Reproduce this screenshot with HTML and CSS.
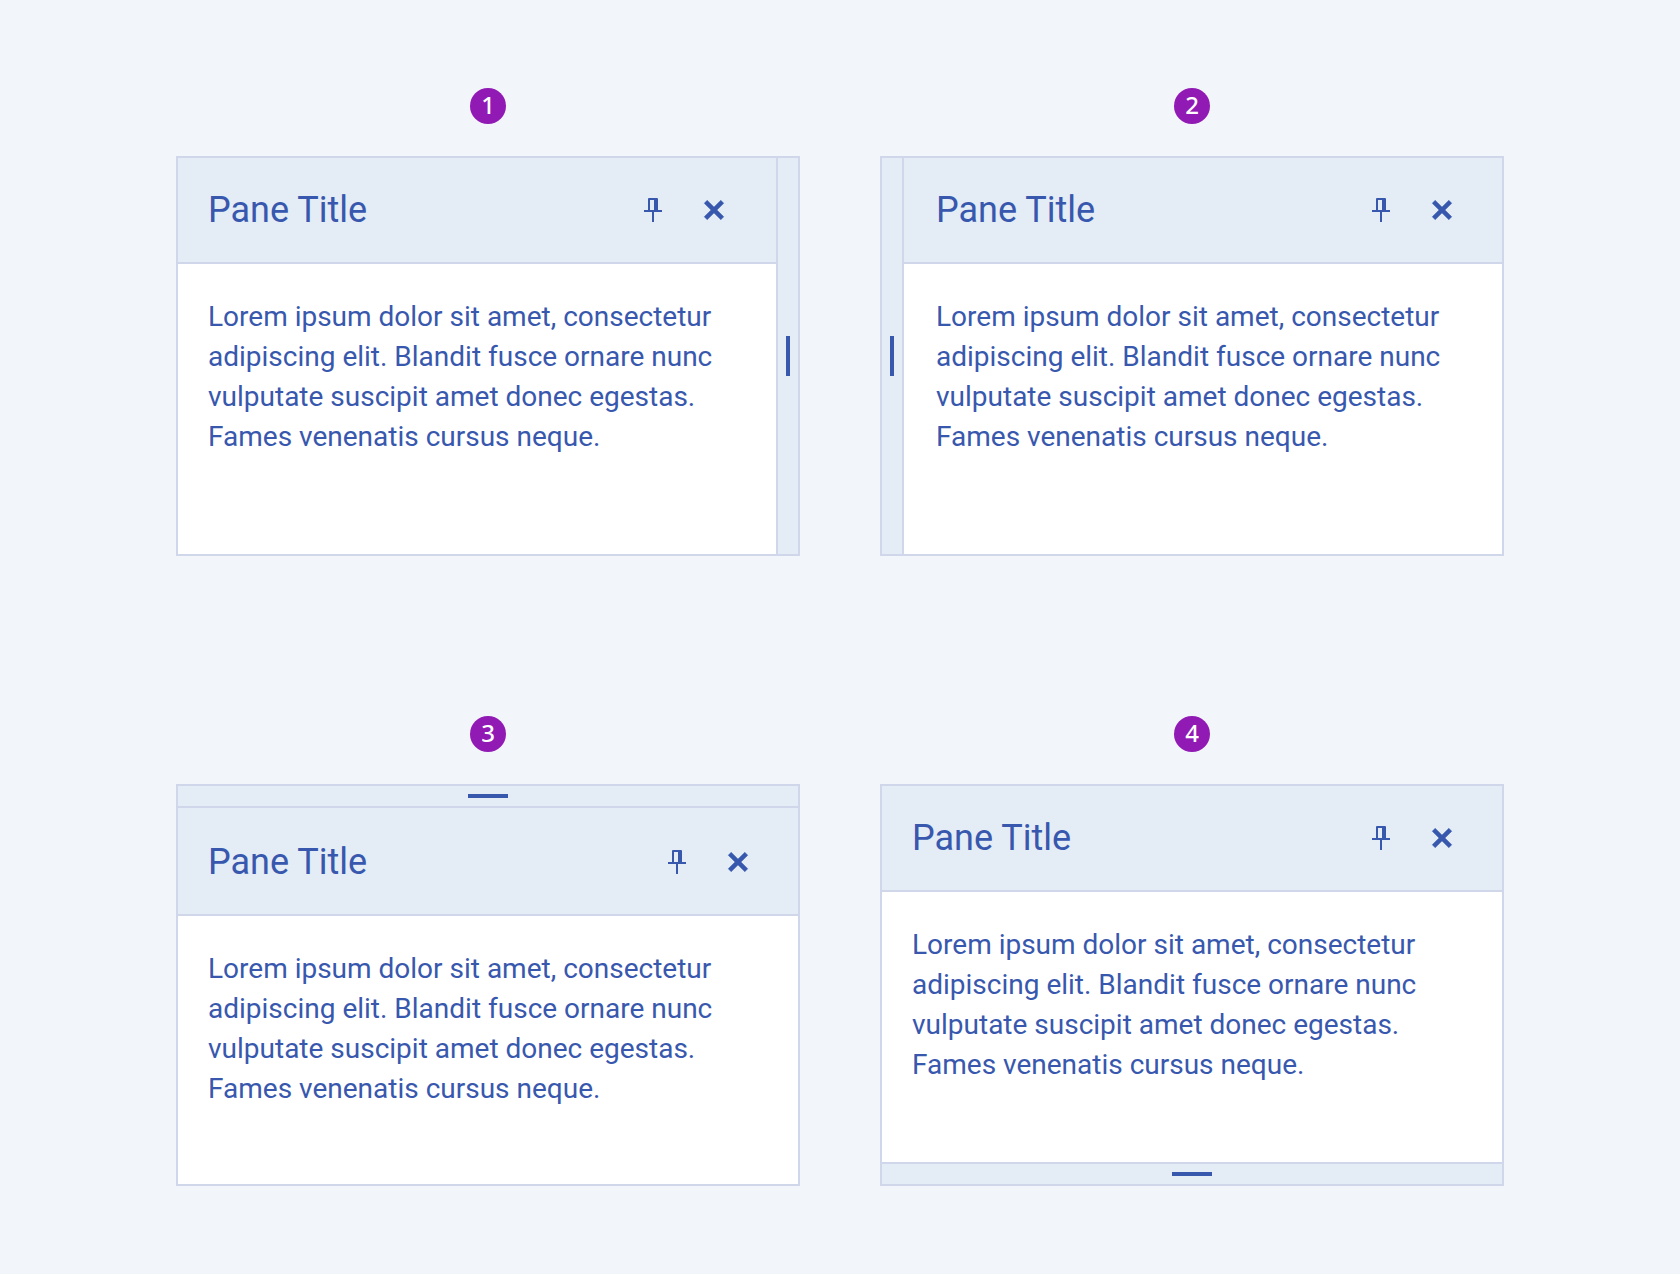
FILE: index.html
```
<!DOCTYPE html>
<html lang="en">
  <head>
    <meta charset="utf-8">
    <meta name="viewport" content="width=device-width, initial-scale=1">
    <title>Pane positions</title>
    <link rel="stylesheet" href="styles.css">
  </head>
  <body>
    <svg width="0" height="0" class="sprite">
      <symbol id="pin" viewBox="0 0 24 24">
        <path d="M8 12V1a1 1 0 0 1 1-1h8a1 1 0 0 1 1 1v11h4v2h-8v10h-2V14H4v-2zM10 2v10h4V2z" fill-rule="evenodd"/>
      </symbol>
      <symbol id="close" viewBox="0 0 24 24">
        <path d="M2.2 5.2l3-3L12 9l6.800-6.800 3 3L15 12l6.800 6.800-3 3L12 15l-6.800 6.800-3-3L9 12z" stroke="currentColor" stroke-width=".4" stroke-linejoin="round"/>
      </symbol>
    </svg>
    <main class="examples">
      <figure class="example">
        <figcaption class="badge">1</figcaption>
        <section class="pane pane-left">
          <div class="content">
            <header class="header">
              <h2 class="title">Pane Title</h2>
              <button class="icon" type="button" aria-label="Pin"><svg><use href="#pin"/></svg></button>
              <button class="icon" type="button" aria-label="Close"><svg><use href="#close"/></svg></button>
            </header>
            <p class="text">Lorem ipsum dolor sit amet, consectetur adipiscing elit. Blandit fusce ornare nunc vulputate suscipit amet donec egestas. Fames venenatis cursus neque.</p>
          </div>
          <div class="splitter" role="separator" aria-orientation="vertical"></div>
        </section>
      </figure>
      <figure class="example">
        <figcaption class="badge">2</figcaption>
        <section class="pane pane-right">
          <div class="splitter" role="separator" aria-orientation="vertical"></div>
          <div class="content">
            <header class="header">
              <h2 class="title">Pane Title</h2>
              <button class="icon" type="button" aria-label="Pin"><svg><use href="#pin"/></svg></button>
              <button class="icon" type="button" aria-label="Close"><svg><use href="#close"/></svg></button>
            </header>
            <p class="text">Lorem ipsum dolor sit amet, consectetur adipiscing elit. Blandit fusce ornare nunc vulputate suscipit amet donec egestas. Fames venenatis cursus neque.</p>
          </div>
        </section>
      </figure>
      <figure class="example">
        <figcaption class="badge">3</figcaption>
        <section class="pane pane-bottom">
          <div class="splitter" role="separator"></div>
          <div class="content">
            <header class="header">
              <h2 class="title">Pane Title</h2>
              <button class="icon" type="button" aria-label="Pin"><svg><use href="#pin"/></svg></button>
              <button class="icon" type="button" aria-label="Close"><svg><use href="#close"/></svg></button>
            </header>
            <p class="text">Lorem ipsum dolor sit amet, consectetur adipiscing elit. Blandit fusce ornare nunc vulputate suscipit amet donec egestas. Fames venenatis cursus neque.</p>
          </div>
        </section>
      </figure>
      <figure class="example">
        <figcaption class="badge">4</figcaption>
        <section class="pane pane-top">
          <div class="content">
            <header class="header">
              <h2 class="title">Pane Title</h2>
              <button class="icon" type="button" aria-label="Pin"><svg><use href="#pin"/></svg></button>
              <button class="icon" type="button" aria-label="Close"><svg><use href="#close"/></svg></button>
            </header>
            <p class="text">Lorem ipsum dolor sit amet, consectetur adipiscing elit. Blandit fusce ornare nunc vulputate suscipit amet donec egestas. Fames venenatis cursus neque.</p>
          </div>
          <div class="splitter" role="separator"></div>
        </section>
      </figure>
    </main>
  </body>
</html>
```

FILE: styles.css
```
:root {
  --page: #f2f6fb;
  --surface: #e4ecf6;
  --line: #d0d7eb;
  --ink: #3858ae;
  --badge: #9119b4;
}
* {
  box-sizing: border-box;
}
body {
  margin: 0;
  background: var(--page);
  color: var(--ink);
  font-family: Roboto, "Liberation Sans", sans-serif;
}
.sprite {
  position: absolute;
}
.examples {
  display: grid;
  grid-template-columns: 1fr 1fr;
  gap: 160px 80px;
  padding: 88px 176px;
}
.example {
  display: flex;
  flex-direction: column;
  gap: 32px;
  margin: 0;
}
.badge {
  align-self: center;
  width: 36px;
  height: 36px;
  border-radius: 50%;
  background: var(--badge);
  color: #fff;
  font: 500 24px/34px "Noto Sans", sans-serif;
  text-align: center;
}
.pane {
  display: flex;
  min-height: 400px;
  border: 2px solid var(--line);
  background: #fff;
}
.pane-top,
.pane-bottom {
  flex-direction: column;
  min-height: 402px;
}
.content {
  flex: 1;
}
.header {
  display: flex;
  align-items: center;
  gap: 38px;
  padding: 30px 48px 30px 30px;
  border-bottom: 2px solid var(--line);
  background: var(--surface);
}
.title {
  flex: 1;
  margin: 0;
  padding-top: 1px;
  font-size: 36px;
  font-weight: 400;
  line-height: 43px;
}
.icon {
  width: 24px;
  height: 24px;
  padding: 0;
  border: 0;
  background: none;
  color: inherit;
  cursor: pointer;
}
.icon svg {
  display: block;
  width: 24px;
  height: 24px;
  fill: currentColor;
}
.text {
  margin: 0;
  padding: 33px 30px;
  font-size: 28px;
  line-height: 40px;
}

/* the splitter sits on the edge that faces the rest of the page */
.splitter {
  display: flex;
  flex: none;
  align-items: center;
  justify-content: center;
  background: var(--surface);
  cursor: row-resize;
}
.splitter::before {
  content: "";
  width: 40px;
  height: 4px;
  background: var(--ink);
}
.pane-left .splitter,
.pane-right .splitter {
  width: 22px;
  cursor: col-resize;
}
.pane-left .splitter::before,
.pane-right .splitter::before {
  width: 4px;
  height: 40px;
}
.pane-top .splitter,
.pane-bottom .splitter {
  height: 22px;
}
.pane-left .splitter {
  border-left: 2px solid var(--line);
}
.pane-right .splitter {
  border-right: 2px solid var(--line);
}
.pane-top .splitter {
  border-top: 2px solid var(--line);
}
.pane-bottom .splitter {
  border-bottom: 2px solid var(--line);
}
.pane-left .header {
  padding-right: 50px;
}
.pane-right .header,
.pane-right .text {
  padding-left: 32px;
}
.pane-bottom .header {
  padding-top: 32px;
}
```
